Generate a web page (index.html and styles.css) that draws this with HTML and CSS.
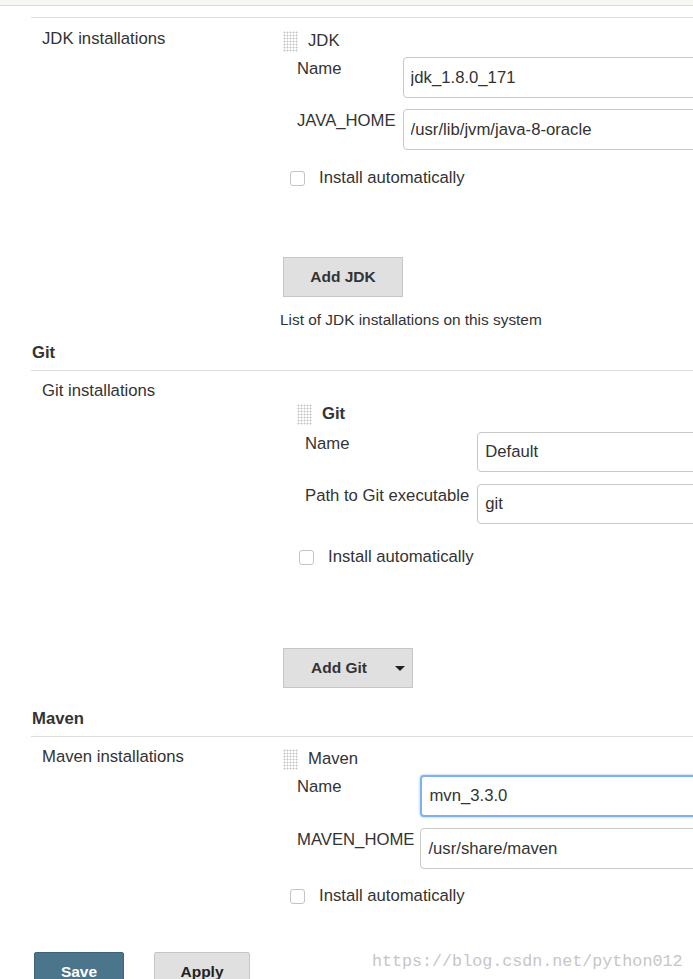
FILE: index.html
```html
<!DOCTYPE html>
<html>
<head>
<meta charset="utf-8">
<link rel="stylesheet" href="styles.css">
</head>
<body>
<div class="topbar"></div>
<div class="main">
  <div class="rule rule-top"></div>

  <div class="setting setting-jdk">
    <div class="setting-name">JDK installations</div>
    <div class="setting-main">
      <div class="item item-jdk">
        <div class="item-head"><span class="handle"></span><span class="item-title">JDK</span></div>
        <div class="fields">
          <label class="field-label">Name</label>
          <input class="field-input" type="text" value="jdk_1.8.0_171">
          <label class="field-label">JAVA_HOME</label>
          <input class="field-input" type="text" value="/usr/lib/jvm/java-8-oracle">
        </div>
        <div class="check-row"><span class="checkbox"></span><span>Install automatically</span></div>
      </div>
      <button class="btn btn-add btn-jdk">Add JDK</button>
      <div class="desc">List of JDK installations on this system</div>
    </div>
  </div>

  <div class="section-head head-git">Git</div>
  <div class="rule"></div>
  <div class="setting setting-git">
    <div class="setting-name">Git installations</div>
    <div class="setting-main">
      <div class="item item-git">
        <div class="item-head"><span class="handle"></span><span class="item-title bold">Git</span></div>
        <div class="fields">
          <label class="field-label">Name</label>
          <input class="field-input" type="text" value="Default">
          <label class="field-label">Path to Git executable</label>
          <input class="field-input" type="text" value="git">
        </div>
        <div class="check-row"><span class="checkbox"></span><span>Install automatically</span></div>
      </div>
      <button class="btn btn-add btn-git"><span>Add Git</span><span class="caret"></span></button>
    </div>
  </div>

  <div class="section-head head-maven">Maven</div>
  <div class="rule"></div>
  <div class="setting setting-maven">
    <div class="setting-name">Maven installations</div>
    <div class="setting-main">
      <div class="item item-maven">
        <div class="item-head"><span class="handle"></span><span class="item-title">Maven</span></div>
        <div class="fields">
          <label class="field-label">Name</label>
          <input class="field-input focused" type="text" value="mvn_3.3.0">
          <label class="field-label">MAVEN_HOME</label>
          <input class="field-input" type="text" value="/usr/share/maven">
        </div>
        <div class="check-row"><span class="checkbox"></span><span>Install automatically</span></div>
      </div>
    </div>
  </div>

  <div class="bottom-bar">
    <button class="btn btn-save">Save</button>
    <button class="btn btn-apply">Apply</button>
  </div>
</div>
<div class="watermark">https://blog.csdn.net/python012</div>
</body>
</html>
```

FILE: styles.css
```css
html, body {
  margin: 0;
  padding: 0;
  overflow: hidden;
  background: #fff;
}
body {
  font-family: "Liberation Sans", Arial, sans-serif;
  font-size: 16.7px;
  color: #333;
  height: 979px;
  position: relative;
}
.topbar {
  height: 5px;
  background: #f6f8f1;
  border-bottom: 1px solid #d9dcd3;
}
.main {
  padding-left: 31px;
  width: 760px;
}
.rule {
  border-top: 1px solid #dedede;
}
.rule-top {
  margin-top: 11px;
}
.setting {
  display: flex;
  line-height: 20px;
}
.setting-name {
  width: 241px;
  padding-left: 11px;
  flex: none;
}
.setting-jdk { padding-top: 11px; }
.setting-git { padding-top: 10px; }
.setting-maven { padding-top: 10px; }
.setting-main {
  flex: 1;
  display: flex;
  flex-direction: column;
  align-items: flex-start;
}
.item { width: 100%; }
.item-head {
  display: flex;
  align-items: center;
  height: 24px;
}
.handle {
  width: 15px;
  height: 21px;
  background-image: radial-gradient(circle, #c4c4c4 0.9px, transparent 1.1px);
  background-size: 3px 3px;
  margin-right: 10px;
}
.item-title.bold { font-weight: bold; }
.fields {
  display: grid;
  grid-template-columns: auto 1fr;
  column-gap: 7px;
  margin-top: 4px;
}
.field-label {
  align-self: start;
  padding-top: 2px;
  line-height: 20px;
  white-space: nowrap;
}
.field-input {
  height: 41px;
  box-sizing: border-box;
  border: 1px solid #c8c8c8;
  border-radius: 4px;
  padding: 0 7px;
  font-family: "Liberation Sans", Arial, sans-serif;
  font-size: 16.7px;
  color: #333;
  background: #fff;
  outline: none;
  width: 100%;
}
.fields .field-input:nth-of-type(2) { margin-top: 11px; }
.fields .field-label:nth-of-type(2) { margin-top: 11px; }
.field-input.focused {
  height: 42px;
  border: 2px solid #7fb2ec;
  box-shadow: 0 0 3px #9cc6f3;
  padding-left: 7px;
}
.check-row {
  display: flex;
  align-items: center;
  height: 20px;
  margin-left: 7px;
}
.checkbox {
  width: 13px;
  height: 13px;
  border: 1px solid #c4c4c4;
  border-radius: 3px;
  background: #fff;
  margin-right: 14px;
}

/* JDK item */
.item-jdk .fields { padding-left: 14px; }
.item-jdk .check-row { margin-top: 18px; }
.btn {
  font-family: "Liberation Sans", Arial, sans-serif;
  font-weight: bold;
  font-size: 15.5px;
  color: #333;
  background: #e0e0e0;
  border: 1px solid #c6c6c6;
  border-radius: 0;
  box-sizing: border-box;
  height: 40px;
  padding: 0;
}
.btn-jdk {
  width: 120px;
  margin-top: 69px;
}
.desc {
  font-size: 15.4px;
  margin-top: 13px;
  margin-left: -3px;
}

/* headings */
.section-head {
  font-weight: bold;
  line-height: 20px;
  padding-left: 1px;
  padding-bottom: 7px;
}
.head-git { margin-top: 13px; }
.head-maven { margin-top: 21px; }

/* Git item */
.item-git .item-head { padding-left: 14px; margin-top: 21px; }
.item-git .fields { padding-left: 22px; margin-top: 6px; column-gap: 8px; }
.item-git .fields .field-input:nth-of-type(2),
.item-git .fields .field-label:nth-of-type(2) { margin-top: 12px; }
.item-git .field-input { height: 40px; }
.item-git .check-row { margin-top: 23px; margin-left: 16px; }
.btn-git {
  width: 130px;
  margin-top: 81px;
  display: flex;
  align-items: center;
  padding-left: 27px;
}
.caret {
  width: 0;
  height: 0;
  border-left: 5px solid transparent;
  border-right: 5px solid transparent;
  border-top: 5px solid #222;
  margin-left: 28px;
}

/* Maven item */
.item-maven .fields { padding-left: 14px; column-gap: 6px; margin-top: 4px; }
.item-maven .check-row { margin-top: 17px; }

/* bottom */
.bottom-bar {
  display: flex;
  gap: 30px;
  margin-top: 46px;
  padding-left: 3px;
}
.btn-save {
  width: 90px;
  height: 40px;
  background: #4b758b;
  border: 1px solid #3f6477;
  color: #fff;
  border-radius: 2px;
}
.btn-apply {
  width: 96px;
  height: 40px;
  border-radius: 2px;
  color: #222;
}
.watermark {
  position: absolute;
  left: 372px;
  top: 951px;
  font-family: "Liberation Mono", "DejaVu Sans Mono", monospace;
  font-size: 16.7px;
  line-height: 22px;
  color: #c6c6c6;
}
```
